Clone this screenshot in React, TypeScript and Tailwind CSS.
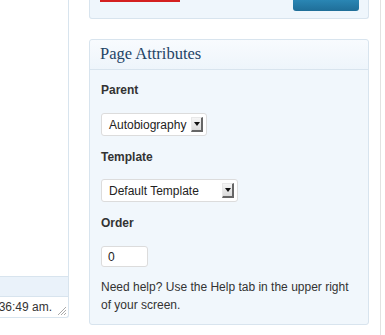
import React from "react";

function SelectBox({ label, width }: { label: string; width: string }) {
  return (
    <div
      className={`${width} h-[23px] flex items-center justify-between bg-white border border-[#dcdcdc] rounded-[3px] pl-[7px] pr-[3px]`}
    >
      <span className="text-[12px] text-[#222] leading-none">{label}</span>
      <span className="w-[12px] h-[15px] flex items-center justify-center bg-gradient-to-b from-[#f6f6f6] to-[#dadada] border-r-2 border-b-2 border-r-[#666] border-b-[#666] border-l border-t border-l-[#e8e8e8] border-t-[#e8e8e8]">
        <svg width="6" height="4" viewBox="0 0 6 4">
          <path d="M0 0 L6 0 L3 4 Z" fill="#111" />
        </svg>
      </span>
    </div>
  );
}

export default function App() {
  return (
    <div
      className="w-[385px] h-[335px] bg-white flex overflow-hidden"
      style={{ fontFamily: '"Liberation Sans", Arial, sans-serif' }}
    >
      {/* Left editor panel */}
      <div className="w-[69px] shrink-0">
        <div className="h-[318px] flex flex-col border-r border-b border-[#d8e4ee] rounded-br-[3px] bg-white">
          <div className="flex-1" />
          <div className="h-[21px] border-t border-b border-[#d8e4ee] bg-[#eaf2fa]" />
          <div className="h-[20px] relative flex items-center justify-end pr-[16px]">
            <span className="whitespace-nowrap text-[12px] text-[#333]">36:49 am.</span>
            <svg
              className="absolute right-[1px] bottom-[1px]"
              width="11"
              height="11"
              viewBox="0 0 11 11"
            >
              <path d="M10 2 L2 10 M10 5 L5 10 M10 8 L8 10" stroke="#aaa" strokeWidth="1" />
            </svg>
          </div>
        </div>
      </div>

      {/* Right column */}
      <div className="w-[280px] shrink-0 ml-[20px] flex flex-col">
        <div className="h-[19px] relative border-l border-r border-b border-[#d8e4ee] rounded-b-[3px] bg-[#eff6fc]">
          <div className="absolute left-[10px] top-0 w-[80px] h-[2px] bg-[#d42020]" />
          <div className="absolute left-[203px] top-0 w-[66px] h-[11px] rounded-b-[3px] bg-gradient-to-b from-[#2a86b4] to-[#1f6e98]" />
        </div>

        <div className="mt-[20px] h-[286px] border border-[#d8e4ee] rounded-[3px] bg-[#f1f7fc] flex flex-col">
          <div className="h-[30px] border-b border-[#d8e4ee] bg-gradient-to-b from-[#f8fbfe] to-[#eef5fb] flex items-center pl-[10px] rounded-t-[3px]">
            <span
              className="text-[16.5px] text-[#1f4466] leading-none"
              style={{ fontFamily: '"Liberation Serif", Georgia, serif' }}
            >
              Page Attributes
            </span>
          </div>
          <div className="pl-[11px] pt-[12px] text-[#333]">
            <div className="text-[12px] font-bold leading-[16px]">Parent</div>
            <div className="mt-[15px]">
              <SelectBox label="Autobiography" width="w-[106px]" />
            </div>
            <div className="mt-[13px] text-[12px] font-bold leading-[16px]">Template</div>
            <div className="mt-[14px]">
              <SelectBox label="Default Template" width="w-[137px]" />
            </div>
            <div className="mt-[13px] text-[12px] font-bold leading-[16px]">Order</div>
            <div className="mt-[15px] w-[47px] h-[21px] bg-white border border-[#dcdcdc] rounded-[3px] flex items-center pl-[6px] text-[12px] text-[#222]">
              0
            </div>
            <p className="mt-[11px] text-[12px] leading-[18px] text-[#333] pr-[10px]">
              Need help? Use the Help tab in the upper right of your screen.
            </p>
          </div>
        </div>
      </div>

      <div className="w-[11px] shrink-0" />
      <div className="w-px h-full bg-[#e2e2e2] shrink-0" />
    </div>
  );
}
